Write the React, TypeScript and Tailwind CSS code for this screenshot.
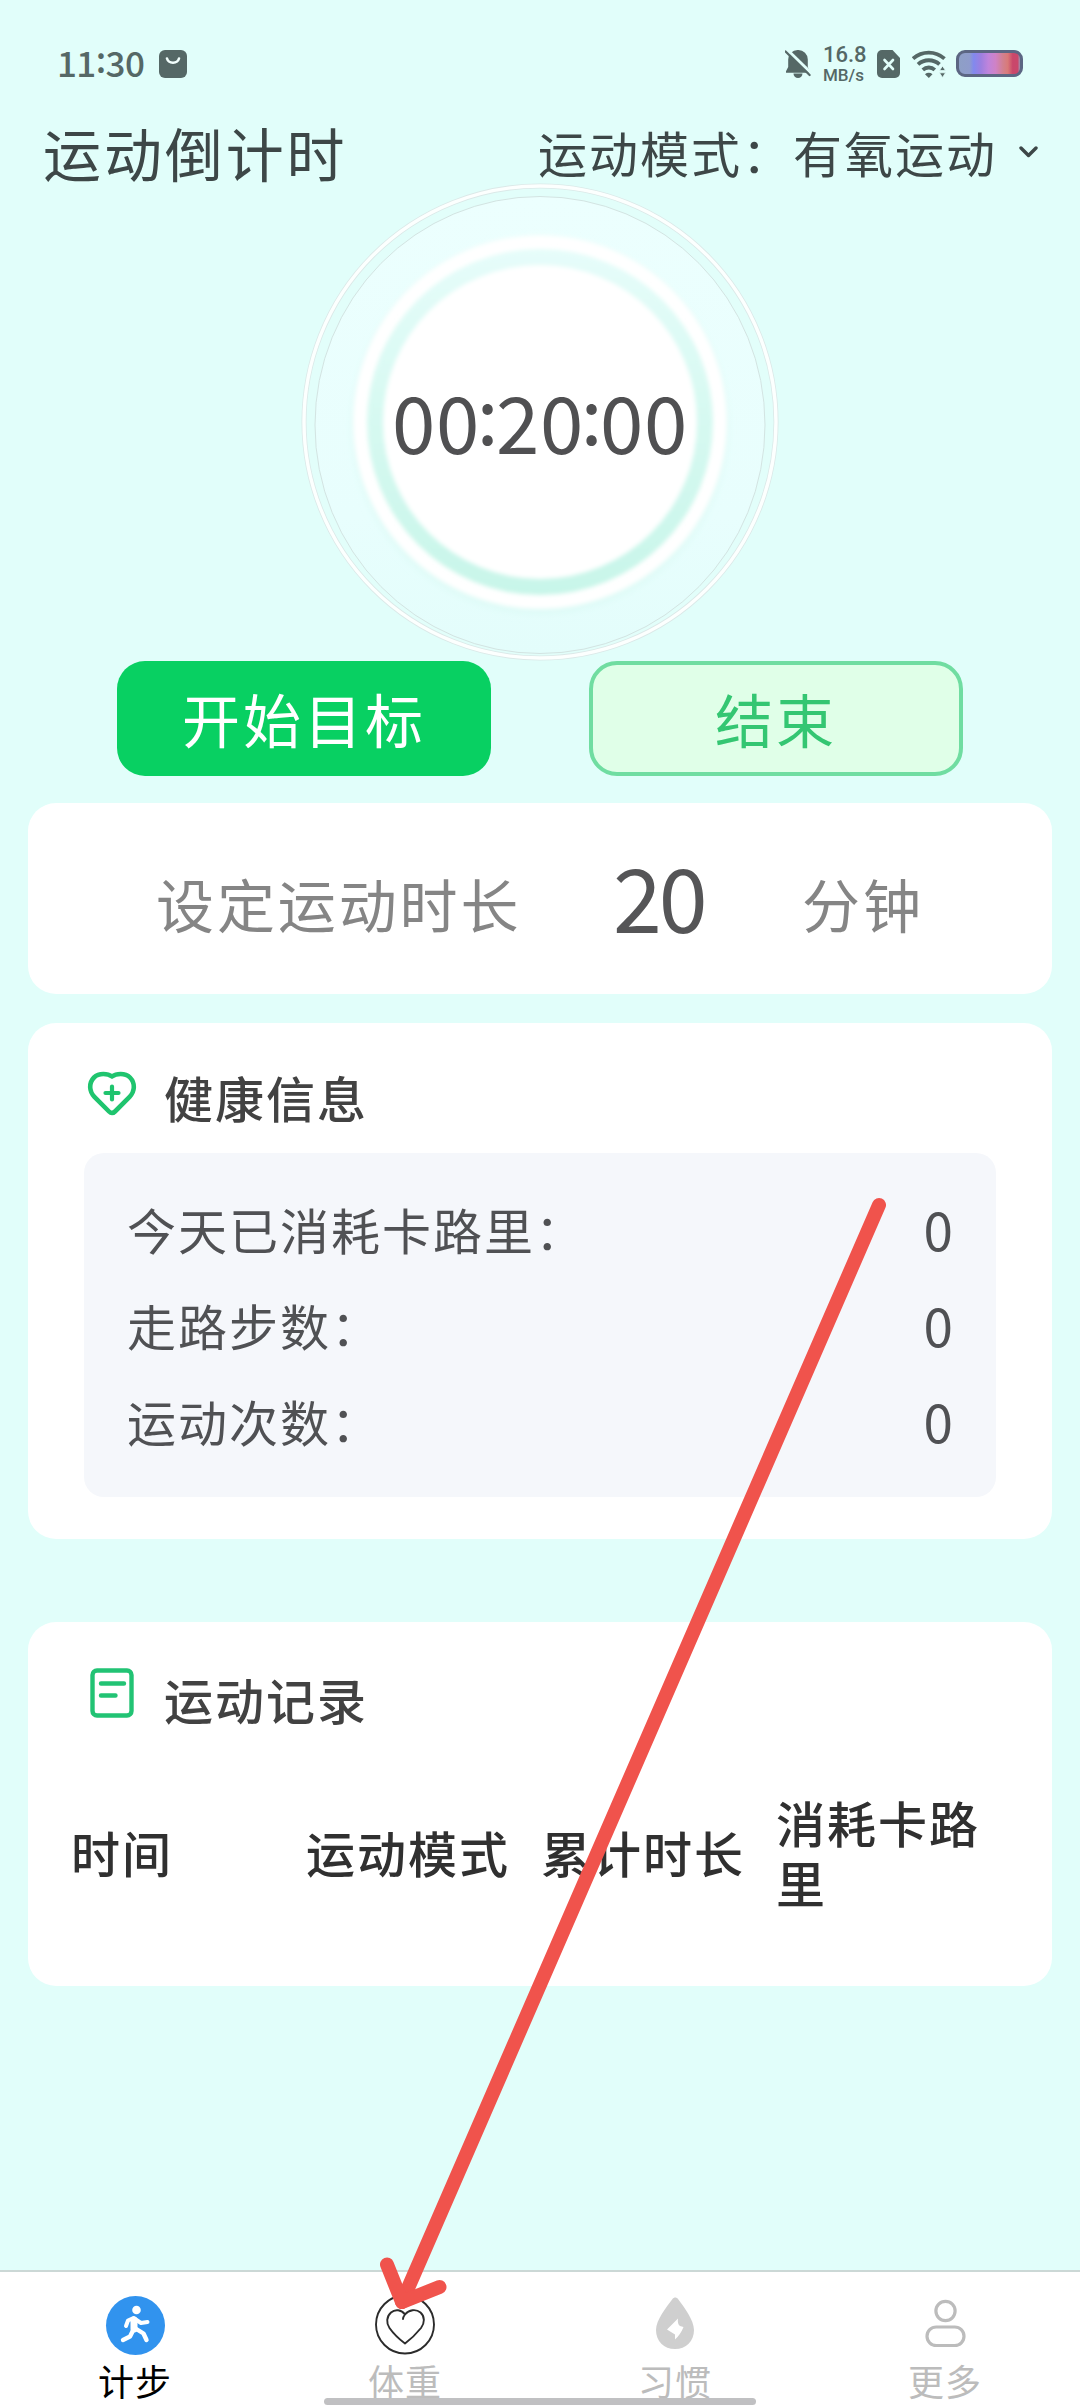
import { useState } from 'react';

const healthRows = [
  { label: '今天已消耗卡路里：', value: 0 },
  { label: '走路步数：', value: 0 },
  { label: '运动次数：', value: 0 },
];

const recordColumns = ['时间', '运动模式', '累计时长', '消耗卡路里'];

function StatusBar() {
  return (
    <div className="h-[127px] flex items-center justify-between pl-[57px] pr-[57px] text-[#556866]">
      <div className="flex items-center">
        <div className="w-[102px] flex items-center pb-[5px] text-[35px] leading-none font-medium tracking-[-0.6px]">
          <span>11</span>
          <span className="pb-[7px]">:</span>
          <span>30</span>
        </div>
        <svg className="w-[28px] h-[28px]" viewBox="0 0 28 28">
          <rect width="28" height="28" rx="6" fill="#556866" />
          <path d="M8 8.5a6.2 5.6 0 0 0 12 0" fill="none" stroke="#f2fffd" strokeWidth="2.6" strokeLinecap="round" />
        </svg>
      </div>

      <div className="flex items-center">
        <svg className="w-[26px] h-[28px] mr-[12px]" viewBox="0 0 26 28">
          <path d="M13 0a9.6 9.6 0 0 1 9.8 9.8V17l2 4.2v1.6H1v-1.6L3.2 17V9.8A9.6 9.6 0 0 1 13 0z" fill="#556866" />
          <path d="M8.5 23.5h9a4.5 4.5 0 0 1-9 0z" fill="#556866" />
          <path d="M2.5 0 27 23.8" stroke="#e1fefa" strokeWidth="3" />
          <path d="M.6 1.5 24.6 25" stroke="#556866" strokeWidth="2.2" strokeLinecap="round" />
        </svg>
        <div className="w-[43px] mr-[11px] flex flex-col items-start font-['Roboto',sans-serif] font-medium whitespace-nowrap">
          <span className="text-[22px] leading-[23px]">16.8</span>
          <span className="text-[17px] leading-[19px]">MB/s</span>
        </div>
        <svg className="w-[23px] h-[28px] mr-[12px]" viewBox="0 0 23 28">
          <path d="M5 0h10.5L23 8v15a5 5 0 0 1-5 5H5a5 5 0 0 1-5-5V5a5 5 0 0 1 5-5z" fill="#556866" />
          <path d="m7.5 10 8.5 9M16 10l-8.500 9" stroke="#e1fefa" strokeWidth="2.6" strokeLinecap="round" />
        </svg>
        <svg className="w-[34px] h-[28px] mr-[10px]" viewBox="0 0 34 28">
          <g fill="none" stroke="#556866" strokeWidth="3.8">
            <path d="M1 8.600a23.500 23.500 0 0 1 31.500 0" />
            <path d="M6 14.400a16 16 0 0 1 21.500 0" />
            <path d="M10.800 19.800a9 9 0 0 1 12 0" />
          </g>
          <path d="M13 24.200a5.500 5.500 0 0 1 7.500 0L16.800 28z" fill="#556866" />
          <path d="M27.500 20.600h6L30.500 16z M27.500 22.800h6L30.500 27.500z" fill="#556866" stroke="#e1fefa" strokeWidth="0.8" />
        </svg>
        <div className="w-[67px] h-[27px] rounded-[9px] border-[3px] border-[#5c6683] bg-[linear-gradient(90deg,#8e9fc6_0%,#8f9ccb_17%,#8289ee_24%,#9d7fe0_36%,#bf84dc_48%,#cf82c6_60%,#d2808f_72%,#d97a78_80%,#c9476b_88%,#c9476b_96%,#9c92b0_100%)]" />
      </div>
    </div>
  );
}

function TimerDial({ time }: { time: string }) {
  return (
    <div className="h-[479px] grid place-items-center">
      <svg className="col-start-1 row-start-1 w-[480px] h-[480px]" viewBox="0 0 480 480">
        <defs>
          <linearGradient id="disc" x1="0" y1="0" x2="0" y2="1">
            <stop offset="0" stopColor="#ecfffe" />
            <stop offset="0.7" stopColor="#e8fefd" />
            <stop offset="1" stopColor="#e3fdfb" />
          </linearGradient>
          <linearGradient id="band" x1="0" y1="0" x2="0" y2="1">
            <stop offset="0" stopColor="#e6fdfa" />
            <stop offset="0.5" stopColor="#d6f9f1" />
            <stop offset="1" stopColor="#c8f6e9" />
          </linearGradient>
          <filter id="soft" x="-10%" y="-10%" width="120%" height="120%">
            <feGaussianBlur stdDeviation="2" />
          </filter>
          <filter id="softer" x="-10%" y="-10%" width="120%" height="120%">
            <feGaussianBlur stdDeviation="4" />
          </filter>
        </defs>
        <circle cx="240" cy="240" r="236" fill="#e2fefa" stroke="#dbe9e8" strokeWidth="5" />
        <circle cx="240" cy="240" r="236" fill="none" stroke="#fcfffe" strokeWidth="3.400" />
        <ellipse cx="240" cy="243" rx="225" ry="228.500" fill="url(#disc)" stroke="#d3e4e2" strokeWidth="1" />
        <circle cx="240" cy="244" r="187" fill="#dcfaf5" filter="url(#softer)" />
        <circle cx="240" cy="240" r="187" fill="#fff" filter="url(#soft)" />
        <circle cx="240" cy="240" r="173" fill="url(#band)" filter="url(#soft)" />
        <circle cx="240" cy="240" r="157" fill="#fff" filter="url(#soft)" />
      </svg>
      <div className="col-start-1 row-start-1 flex items-center pb-[4px] text-[78px] leading-none text-[#505052] tracking-[0.7px]">
        {time.split(':').map((part, i) => (
          <div key={i} className="flex items-center">
            {i > 0 && <span className="w-[16px] flex justify-center pb-[18px]">:</span>}
            <span>{part}</span>
          </div>
        ))}
      </div>
    </div>
  );
}

function HeartPlusIcon() {
  return (
    <svg className="w-[50px] h-[46px]" viewBox="0 0 50 46" fill="none" stroke="#1fc46e" strokeWidth="4.600" strokeLinecap="round" strokeLinejoin="round">
      <path d="M25 5.500C21 2.500 12 1.500 7 6.500c-5.500 5.600-4.800 14 .4 19.300L22 40.500c2 2 4 2 6 0l14.600-14.700c5.200-5.300 5.900-13.700.4-19.300-5-5-14-4-18-1z" />
      <path d="M25 15.500v13M18.500 22h13" strokeWidth="4.200" />
    </svg>
  );
}

function NoteIcon() {
  return (
    <svg className="w-[44px] h-[50px]" viewBox="0 0 44 50" fill="none" stroke="#22c374" strokeWidth="4.400" strokeLinecap="round">
      <rect x="2.500" y="2.500" width="39" height="45" rx="4.500" />
      <path d="M11 15.500h23M11 27.500h14.500" />
    </svg>
  );
}

function WalkIcon() {
  return (
    <svg className="w-[60px] h-[60px]" viewBox="0 0 60 60">
      <circle cx="30.500" cy="30.500" r="29.500" fill="#3193ee" />
      <g fill="none" stroke="#fff" strokeLinecap="round" strokeLinejoin="round">
        <circle cx="31.500" cy="15" r="4.300" fill="#fff" stroke="none" />
        <path d="M29 25v9" strokeWidth="7" />
        <path d="M21 31 23 25.500 28.500 23 36 28 42.500 27" strokeWidth="4" />
        <path d="M28.500 34.500 25 41.500 18 45" strokeWidth="4.400" />
        <path d="M30.500 33.500 38.500 38.500 41.500 45" strokeWidth="4.400" />
      </g>
    </svg>
  );
}

function HeartCircleIcon() {
  return (
    <svg className="w-[60px] h-[60px]" viewBox="0 0 60 60" fill="none" stroke="#2b2b2b" strokeWidth="1.900" strokeLinecap="round" strokeLinejoin="round">
      <circle cx="30" cy="29.500" r="29" />
      <path d="M28 24c0-1.500.8-3 2-4.500C26.500 14.500 20 14 16 17.500c-4.500 4-5 10.500-1.500 15.500C18 38 24 44 30 48.500 36 44 42 38 46 33c3.800-5 4-11.500-.5-15.500-4.500-3.800-11.500-3-15.500 2" />
    </svg>
  );
}

function DropIcon() {
  return (
    <svg className="w-[60px] h-[60px]" viewBox="0 0 60 60">
      <path d="M27.500 4c1.500-2 4-2 5.500 0C39 12 49 25 49 35c0 11.500-8 19-19 19s-19-7.500-19-19C11 25 21.500 12 27.500 4z" fill="#cfcfcf" />
      <path d="M33 23.500c-.5 3.500 0 6 2 7.500l3.500 1c-2 5-5 9.500-8.500 12.500v-5L22 34.500z" fill="#fff" />
    </svg>
  );
}

function UserIcon() {
  return (
    <svg className="w-[60px] h-[60px]" viewBox="0 0 60 60" fill="none" stroke="#bcbcbc" strokeWidth="3.200">
      <circle cx="30.500" cy="16" r="9.600" />
      <rect x="12" y="32" width="37" height="18.500" rx="9.200" />
    </svg>
  );
}

const tabs = [
  { label: '计步', Icon: WalkIcon },
  { label: '体重', Icon: HeartCircleIcon },
  { label: '习惯', Icon: DropIcon },
  { label: '更多', Icon: UserIcon },
];

export default function App() {
  const [activeTab, setActiveTab] = useState('计步');

  return (
    <div className="relative w-[1080px] h-[2408px] flex flex-col overflow-hidden bg-[#e1fefa] font-['Noto_Sans_CJK_SC',sans-serif]">
      <StatusBar />

      {/* Header */}
      <div className="h-[55px] flex items-center justify-between pb-[5px] pl-[43px] pr-[42px] text-[#3d4747]">
        <h1 className="text-[58px] leading-[50px] tracking-[2.900px] whitespace-nowrap">运动倒计时</h1>
        <div className="flex items-center text-[49px] leading-[50px] tracking-[2px] whitespace-nowrap">
          <span>运动模式：</span>
          <span>有氧运动</span>
          <svg className="w-[19px] h-[12px] ml-[22px] mb-[1px]" viewBox="0 0 19 12" fill="none" stroke="#3d4747" strokeWidth="3.400" strokeLinecap="round" strokeLinejoin="round">
            <path d="m2 2 7.500 7.500L17 2" />
          </svg>
        </div>
      </div>

      <TimerDial time="00:20:00" />

      <div className="h-[115px] flex gap-[98px] pl-[117px] text-[58px] tracking-[3px]">
        <button className="w-[374px] rounded-[28px] bg-[#08d062] text-white">开始目标</button>
        <button className="w-[374px] rounded-[28px] border-4 border-[#70dda1] bg-[#e0ffe8] text-[#34c672]">结束</button>
      </div>

      {/* Duration */}
      <div className="mx-[28px] mt-[27px] h-[191px] rounded-[28px] bg-white flex items-center pl-[128px] text-[58px] tracking-[2.900px] text-[#858585]">
        <span className="w-[457px] pt-[9px]">设定运动时长</span>
        <span className="w-[189px] pb-[8px] text-[88px] leading-none tracking-[-3px] text-[#555557]">20</span>
        <span className="pt-[9px]">分钟</span>
      </div>

      {/* Health info */}
      <div className="mx-[28px] mt-[29px] h-[516px] rounded-[28px] bg-white px-[56px]">
        <div className="h-[130px] flex items-center pt-[17px]">
          <div className="w-[80px] pl-[3px] pb-[5px]">
            <HeartPlusIcon />
          </div>
          <h2 className="text-[49px] leading-none font-medium tracking-[2px] text-[#424242]">健康信息</h2>
        </div>
        <div className="h-[344px] rounded-[20px] bg-[#f5f7fb] pt-[28px] pl-[43px] pr-[43px] text-[49px] text-[#505154]">
          {healthRows.map(row => (
            <div key={row.label} className="h-[96px] flex items-center justify-between">
              <span className="tracking-[2px]">{row.label}</span>
              <span className="pb-[2px] text-[53px] leading-none">{row.value}</span>
            </div>
          ))}
        </div>
      </div>

      {/* Exercise records */}
      <div className="mx-[28px] mt-[83px] h-[364px] rounded-[28px] bg-white">
        <div className="h-[154px] flex items-center pl-[62px]">
          <div className="w-[74px] pb-[12px]">
            <NoteIcon />
          </div>
          <h2 className="pb-[2px] text-[49px] leading-none font-medium tracking-[2px] text-[#424242]">运动记录</h2>
        </div>
        <div className="h-[152px] w-[940px] ml-[43px] grid grid-cols-4 items-center text-[49px] leading-[60px] font-medium tracking-[2px] text-[#303030]">
          {recordColumns.map(name => (
            <span key={name}>{name}</span>
          ))}
        </div>
      </div>

      {/* Tab bar */}
      <div className="mt-auto h-[138px] grid grid-cols-4 border-t-2 border-[#cbd8d6] bg-white">
        {tabs.map(({ label, Icon }) => (
          <button
            key={label}
            onClick={() => setActiveTab(label)}
            className={`flex flex-col items-center justify-start pt-[23px] text-[36px] leading-[50px] tracking-[1px] ${
              activeTab === label ? 'text-black' : 'text-[#bcbcbc]'
            }`}
          >
            <Icon />
            <span>{label}</span>
          </button>
        ))}
      </div>

      {/* Home gesture bar */}
      <div className="absolute left-[324px] bottom-[3px] w-[432px] h-[7px] rounded-full bg-[#c0c0c2]" />

      {/* Guide arrow pointing at the weight tab */}
      <svg className="absolute inset-0 w-[1080px] h-[2408px] pointer-events-none" viewBox="0 0 1080 2408" fill="none" stroke="#f0534c" strokeWidth="14" strokeLinecap="round" strokeLinejoin="round">
        <path d="M879 1205 402 2302" />
        <path d="M387 2264.500 402 2302 439.500 2287" />
      </svg>
    </div>
  );
}
